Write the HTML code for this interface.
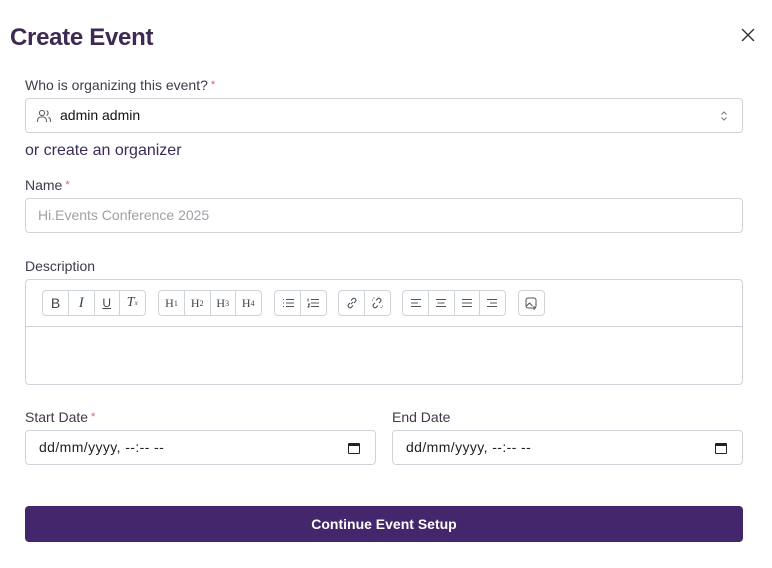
<!DOCTYPE html>
<html><head><meta charset="utf-8"><style>
*{box-sizing:border-box;margin:0;padding:0}
body{width:772px;height:568px;background:#fff;font-family:"Liberation Sans",sans-serif;position:relative;overflow:hidden;color:#222}
.a{position:absolute}
.lbl{font-size:14px;color:#403a4a;line-height:16px}
.req{color:#e06060;font-size:11px;vertical-align:top;margin-left:3px}
.box{border:1px solid #ced4da;border-radius:4px;background:#fff}
.tb{position:absolute;top:290px;height:26px;border:1px solid #ced4da;border-radius:4px;display:flex}
.tb div{width:25.5px;height:24px;border-left:1px solid #ced4da;display:flex;align-items:center;justify-content:center;font-size:12px;color:#444}
.tb div:first-child{border-left:none;width:25px}
.date{font-size:14px;color:#222;padding-left:13px;line-height:33px;letter-spacing:0.4px}
.cal{position:absolute;right:15px;top:12px;width:12px;height:11px;border:1.5px solid #222;border-top-width:3px;border-radius:1px}
</style></head><body>
<div class="a" style="left:10px;top:24px;font-size:24px;font-weight:bold;color:#3d2a52;letter-spacing:-0.3px">Create Event</div>
<svg class="a" style="left:741px;top:28px" width="14" height="14" viewBox="0 0 14 14"><path d="M1 1L13 13M13 1L1 13" stroke="#333" stroke-width="1.4"/></svg>

<div class="a lbl" style="left:25px;top:77px">Who is organizing this event?<span class="req">*</span></div>
<div class="a box" style="left:25px;top:98px;width:718px;height:35px">
<svg class="a" style="left:10px;top:9px" width="16" height="16" viewBox="0 0 16 16" fill="none" stroke="#666" stroke-width="1.1"><circle cx="6" cy="5" r="2.6"/><path d="M1.5 14v-1.5a3.5 3.5 0 0 1 3.5-3.5h2a3.5 3.5 0 0 1 3.5 3.5V14"/><path d="M10.5 2.6a2.6 2.6 0 0 1 0 4.8M12.5 9.2a3.4 3.4 0 0 1 2 3.1V14"/></svg>
<div class="a" style="left:34px;top:8px;font-size:14px;color:#111">admin admin</div>
<svg class="a" style="left:694px;top:11px" width="8" height="12" viewBox="0 0 8 12" fill="none" stroke="#777" stroke-width="1"><path d="M1.5 4.5L4 2l2.5 2.5M1.5 7.5L4 10l2.5-2.5"/></svg>
</div>
<div class="a" style="left:25px;top:142px;font-size:16px;color:#3d2a5a">or create an organizer</div>

<div class="a lbl" style="left:25px;top:177px">Name<span class="req">*</span></div>
<div class="a box" style="left:25px;top:198px;width:718px;height:35px"><div class="a" style="left:12px;top:8px;font-size:14px;color:#a0a0a8">Hi.Events Conference 2025</div></div>

<div class="a lbl" style="left:25px;top:258px">Description</div>
<div class="a box" style="left:25px;top:279px;width:718px;height:106px"><div class="a" style="left:0;top:46px;width:716px;border-top:1px solid #ced4da"></div></div>
<div class="tb" style="left:42px"><div style="font-size:14px">B</div><div style="font-style:italic;font-family:'Liberation Serif';font-size:15px">I</div><div style="text-decoration:underline;font-size:12px">U</div><div style="font-style:italic;font-family:'Liberation Serif';font-size:14px">T<sub style="font-size:7px">x</sub></div></div>
<div class="tb" style="left:158px;font-family:'Liberation Serif'"><div>H<small style="font-size:8px">1</small></div><div>H<small style="font-size:8px">2</small></div><div>H<small style="font-size:8px">3</small></div><div>H<small style="font-size:8px">4</small></div></div>
<div class="tb" style="left:274px"><div><svg width="12" height="10" stroke="#555" stroke-width="1"><path d="M4 1.5h8M4 5h8M4 8.5h8M1 1.5h1M1 5h1M1 8.5h1"/></svg></div><div><svg width="12" height="10" stroke="#555" stroke-width="1"><path d="M4 1.5h8M4 5h8M4 8.5h8M1 .5v3M1 6h1.5l-1.5 3h1.5"/></svg></div></div>
<div class="tb" style="left:338px"><div><svg width="12" height="12" fill="none" stroke="#555" stroke-width="1.1"><path d="M5 7l2-2M4 6L2.5 7.5a2 2 0 0 0 2.8 2.8L7 8.5M8 6l1.5-1.5a2 2 0 0 0-2.8-2.8L5 3.5"/></svg></div><div><svg width="12" height="12" fill="none" stroke="#555" stroke-width="1.1"><path d="M4 6L2.5 7.5a2 2 0 0 0 2.8 2.8L7 8.5M8 6l1.5-1.5a2 2 0 0 0-2.8-2.8L5 3.5M1 3h1M3 .5v1M10 11v-1M11 9h1"/></svg></div></div>
<div class="tb" style="left:402px"><div><svg width="12" height="10" stroke="#555"><path d="M1 1.5h10M1 5h7M1 8.5h10"/></svg></div><div><svg width="12" height="10" stroke="#555"><path d="M1 1.5h10M2.5 5h7M1 8.5h10"/></svg></div><div><svg width="12" height="10" stroke="#555"><path d="M1 1.5h10M1 5h10M1 8.5h10"/></svg></div><div><svg width="12" height="10" stroke="#555"><path d="M1 1.5h10M4 5h7M1 8.5h10"/></svg></div></div>
<div class="tb" style="left:518px"><div><svg width="13" height="13" fill="none" stroke="#555" stroke-width="1"><rect x="1" y="1" width="10" height="10" rx="2"/><path d="M1.5 9l3-3 3 3M9 9v4M7 11h4"/></svg></div></div>

<div class="a lbl" style="left:25px;top:409px">Start Date<span class="req">*</span></div>
<div class="a lbl" style="left:392px;top:409px">End Date</div>
<div class="a box date" style="left:25px;top:430px;width:351px;height:35px">dd/mm/yyyy, --:-- --<div class="cal"></div></div>
<div class="a box date" style="left:392px;top:430px;width:351px;height:35px">dd/mm/yyyy, --:-- --<div class="cal"></div></div>

<div class="a" style="left:25px;top:506px;width:718px;height:36px;background:#43266b;border-radius:4px;color:#fff;font-size:14px;font-weight:bold;text-align:center;line-height:36px">Continue Event Setup</div>
</body></html>
